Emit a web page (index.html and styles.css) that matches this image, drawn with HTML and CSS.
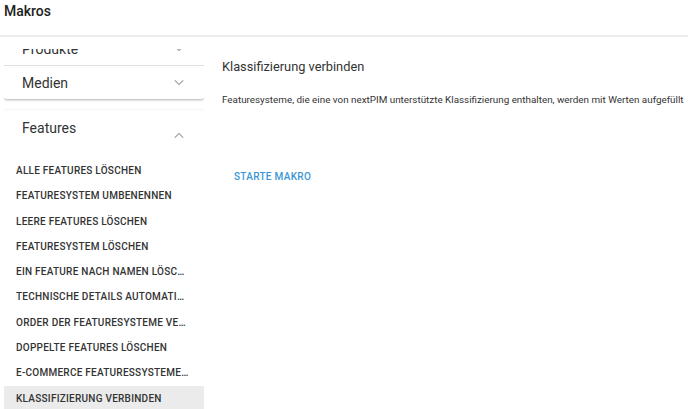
FILE: index.html
```html
<!DOCTYPE html>
<html lang="de">
<head>
  <meta charset="UTF-8">
  <meta name="viewport" content="width=device-width, initial-scale=1.0">
  <title>Makros</title>
  <link rel="stylesheet" href="styles.css">
</head>
<body>
  <header class="topbar">
    <h1>Makros</h1>
  </header>

  <div class="layout">
    <aside class="sidebar">
      <div class="sidebar-scroll">
        <div class="panel-group">
          <div class="panel-head">
            <span>Produkte</span>
            <svg class="chevron" viewBox="0 0 12 8"><path d="M1 1.5l5 5 5-5"/></svg>
          </div>
          <div class="panel-head">
            <span>Medien</span>
            <svg class="chevron" viewBox="0 0 12 8"><path d="M1 1.5l5 5 5-5"/></svg>
          </div>
        </div>

        <div class="panel-group expanded">
          <div class="panel-head open">
            <span>Features</span>
            <svg class="chevron" viewBox="0 0 12 8"><path d="M1 6.5l5-5 5 5"/></svg>
          </div>
          <ul class="macro-list">
            <li>Alle Features löschen</li>
            <li>Featuresystem umbenennen</li>
            <li>Leere Features löschen</li>
            <li>Featuresystem löschen</li>
            <li>Ein Feature nach Namen löschen</li>
            <li>Technische Details automatisch zuordnen</li>
            <li>Order der Featuresysteme verwalten</li>
            <li>Doppelte Features löschen</li>
            <li>E-Commerce Featuressysteme erstellen</li>
            <li class="active">Klassifizierung verbinden</li>
          </ul>
        </div>
      </div>
    </aside>

    <main class="content">
      <h2>Klassifizierung verbinden</h2>
      <p>Featuresysteme, die eine von nextPIM unterstützte Klassifizierung enthalten, werden mit Werten aufgefüllt</p>
      <button class="btn-text">Starte Makro</button>
    </main>
  </div>
</body>
</html>
```

FILE: styles.css
```css
body {
  font-family: Roboto, "Liberation Sans", sans-serif;
  background-color: #fff;
  color: #333;
  margin: 0;
  height: 409px;
  overflow: hidden;
}

.topbar {
  height: 35px;
  border-bottom: 2px solid #ececec;
  padding: 0 4px;
}

.topbar h1 {
  margin: 0;
  padding-top: 2px;
  font-size: 14px;
  font-weight: 500;
  line-height: 18px;
  color: #222;
}

.layout {
  display: flex;
  padding-top: 12px;
}

.sidebar {
  width: 200px;
  margin-left: 4px;
  height: 360px;
  overflow: hidden;
  flex-shrink: 0;
}

.sidebar-scroll {
  margin-top: -17px;
  padding: 0 0 4px;
}

.panel-group {
  background-color: #fff;
  box-shadow: 0 1px 3px rgba(0, 0, 0, 0.25), 0 1px 1px rgba(0, 0, 0, 0.08);
  border-radius: 2px;
}

.panel-group.expanded {
  margin-top: 11px;
}

.panel-head {
  height: 33px;
  display: flex;
  align-items: center;
  justify-content: space-between;
  padding: 0 20px 0 18px;
  font-size: 14px;
  color: #333;
}

.panel-head + .panel-head {
  border-top: 1px solid #e2e2e2;
}

.panel-head.open {
  height: 40px;
  align-items: flex-start;
  padding-top: 10px;
  box-sizing: border-box;
}

.panel-head.open .chevron {
  margin-top: 12px;
}

.chevron {
  width: 10px;
  height: 7px;
  fill: none;
  stroke: #9a9a9a;
  stroke-width: 1.3;
}

.macro-list {
  list-style: none;
  margin: 0;
  padding: 8px 0 0;
}

.macro-list li {
  height: 25.3px;
  line-height: 25.3px;
  padding: 0 14px 0 12px;
  font-size: 10px;
  font-weight: 500;
  letter-spacing: 0.25px;
  text-transform: uppercase;
  color: #333;
  white-space: nowrap;
  overflow: hidden;
  text-overflow: ellipsis;
}

.macro-list li.active {
  background-color: #ebebeb;
}

.content {
  flex: 1;
  padding: 10px 0 0 18px;
}

.content h2 {
  margin: 0;
  font-size: 12.8px;
  font-weight: 400;
  line-height: 16px;
  color: #333;
}

.content p {
  margin: 18px 0 0;
  font-size: 9.85px;
  line-height: 14px;
  color: #333;
  white-space: nowrap;
}

.btn-text {
  margin-top: 58px;
  background: none;
  border: none;
  padding: 6px 12px;
  font-family: inherit;
  font-size: 10px;
  font-weight: 500;
  letter-spacing: 0.3px;
  text-transform: uppercase;
  color: #3a97d4;
  cursor: pointer;
}
```
